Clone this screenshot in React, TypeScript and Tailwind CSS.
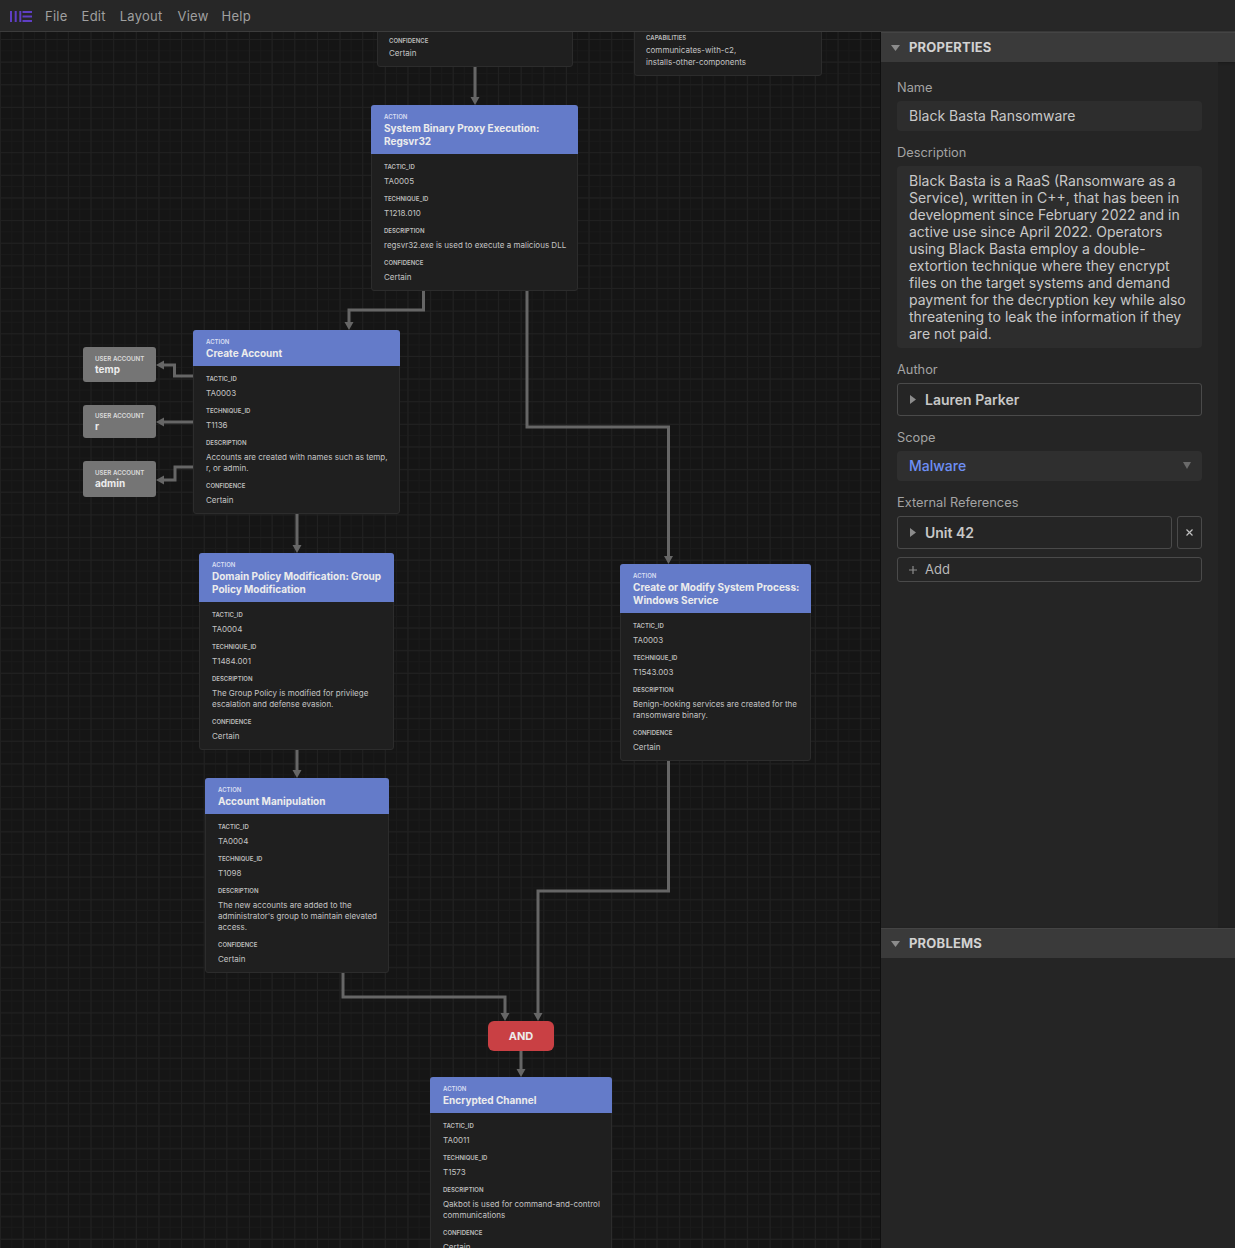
import React from 'react';

type Field = { label: string; value: string };

const action = (tactic: string, technique: string, description: string): Field[] => [
  { label: 'TACTIC_ID', value: tactic },
  { label: 'TECHNIQUE_ID', value: technique },
  { label: 'DESCRIPTION', value: description },
  { label: 'CONFIDENCE', value: 'Certain' },
];

const Rows = ({ fields }: { fields: Field[] }) => (
  <div className="pt-[9px] pr-[9px] pl-3">
    {fields.map((f) => (
      <div key={f.label} className="pb-[8px] last:pb-[7px]">
        <div className="text-[6px] leading-[8px] font-semibold text-[#bdbdbd]">{f.label}</div>
        <div className="mt-[5px] text-[8px] leading-[11px] text-[#c4c4c4]">{f.value}</div>
      </div>
    ))}
  </div>
);

const ActionNode = ({
  className,
  title,
  fields,
}: {
  className: string;
  title: string;
  fields: Field[];
}) => (
  <div className={`absolute rounded-[3px] border border-[#2c2c2c] bg-[#1f1f1f] ${className}`}>
    <div className="-mx-px -mt-px rounded-t-[3px] bg-[#647bc9] pt-[8px] pr-[10px] pb-[5.5px] pl-[13px]">
      <div className="text-[6px] leading-[8px] font-semibold text-[#d9dff2]">ACTION</div>
      <div className="mt-[1px] text-[10px] leading-[13px] font-bold text-[#ececec]">{title}</div>
    </div>
    <Rows fields={fields} />
  </div>
);

const AccountNode = ({ className, name }: { className: string; name: string }) => (
  <div className={`absolute w-[73px] rounded-[3px] bg-[#757575] pl-3 ${className}`}>
    <div className="text-[6.2px] leading-[8px] font-semibold whitespace-nowrap text-[#dcdcdc]">USER ACCOUNT</div>
    <div className="text-[10px] leading-[12px] font-bold text-[#ececec]">{name}</div>
  </div>
);

// edge routes in page coordinates, last segment carries the arrow head
const edges = [
  'M475 67V98',
  'M423.5 290V310H349V323',
  'M527 290V427H668.5V557',
  'M193 376H174.5V365H163',
  'M193 422H163',
  'M193 467H175V480H163',
  'M297 513V546',
  'M297 750V771',
  'M343 973V997H505V1014',
  'M668.5 761V891H538V1014',
  'M521 1051V1070',
];

const arrows = [
  '470.5 97 479.5 97 475 105',
  '344.5 322 353.5 322 349 330',
  '664 556 673 556 668.5 564',
  '164 360.5 164 369.5 156 365',
  '164 417.5 164 426.5 156 422',
  '164 475.5 164 484.5 156 480',
  '292.5 545 301.5 545 297 553',
  '292.5 770 301.5 770 297 778',
  '500.5 1013 509.5 1013 505 1021',
  '533.5 1013 542.5 1013 538 1021',
  '516.5 1069 525.5 1069 521 1077',
];

const Edges = () => (
  <svg className="absolute inset-0 h-[1216px] w-[881px]" viewBox="0 32 881 1216" fill="none">
    {edges.map((d) => (
      <path key={d} d={d} stroke="#666666" strokeWidth="3" />
    ))}
    {arrows.map((p) => (
      <polygon key={p} points={p} fill="#666666" />
    ))}
  </svg>
);

const Caret = ({ open }: { open?: boolean }) =>
  open ? (
    <svg width="9" height="6" viewBox="0 0 9 6">
      <path d="M0 0H9L4.5 6Z" fill="#8c8c8c" />
    </svg>
  ) : (
    <svg width="6" height="9" viewBox="0 0 6 9">
      <path d="M0 0V9L6 4.5Z" fill="#8c8c8c" />
    </svg>
  );

const PanelHeader = ({ title }: { title: string }) => (
  <div className="flex h-[30px] shrink-0 items-center gap-[9px] border-t border-[#444444] bg-[#3a3a3a] pl-[10px] shadow-[0_1px_2px_#1a1a1a]">
    <Caret open />
    <span className="text-[13px] font-bold tracking-[0.2px] text-[#d2d2d2]">{title}</span>
  </div>
);

const Label = ({ children }: { children: React.ReactNode }) => (
  <div className="mb-[5px] h-[17px] pt-[1px] text-[12.8px] leading-[16px] text-[#a3a3a3]">{children}</div>
);

const Expander = ({ title, className }: { title: string; className: string }) => (
  <div className={`flex h-[33px] items-center gap-[9px] rounded-[3px] border border-[#4a4a4a] pl-[12px] ${className}`}>
    <Caret />
    <span className="text-[14px] font-semibold text-[#c8c8c8]">{title}</span>
  </div>
);

export default function App() {
  return (
    <div className="flex h-screen w-full flex-col overflow-hidden bg-[#252525] font-['Inter',sans-serif]">
      {/* Menu bar */}
      <header className="flex h-[32px] shrink-0 items-center border-b border-[#3c3c3c] bg-[#272727] pt-[2px] pl-[10px] text-[13px] tracking-[0.25px] text-[#a0a0a0]">
        <svg width="22" height="11" viewBox="0 0 22 11" fill="#5f3fc4">
          <rect x="0" y="0" width="2" height="11" />
          <rect x="4.7" y="0" width="2" height="11" />
          <rect x="9.3" y="0" width="2" height="11" />
          <rect x="12.5" y="0" width="9.5" height="2" />
          <rect x="12.5" y="4.5" width="9.5" height="2" />
          <rect x="12.5" y="9" width="9.5" height="2" />
        </svg>
        <span className="ml-[13px]">File</span>
        <span className="ml-[14px]">Edit</span>
        <span className="ml-[14px]">Layout</span>
        <span className="ml-[15px]">View</span>
        <span className="ml-[13px]">Help</span>
      </header>

      <div className="flex min-h-0 flex-1">
        {/* Flow canvas */}
        <main className="relative w-[881px] shrink-0 overflow-hidden border-r border-[#0f0f0f] bg-[#151515] bg-[linear-gradient(#212121_1px,transparent_1px),linear-gradient(90deg,#212121_1px,transparent_1px),linear-gradient(#1a1a1a_1px,transparent_1px),linear-gradient(90deg,#1a1a1a_1px,transparent_1px)] bg-[size:22.65px_22.65px,22.65px_22.65px,11.325px_11.325px,11.325px_11.325px] bg-[position:0px_7px,0px_7px,0px_7px,0px_7px]">
          <Edges />

          <div className="absolute top-[-1px] left-[377px] w-[196px] rounded-b-[3px] border border-[#2c2c2c] bg-[#1f1f1f] px-[11px] pt-[5px] pb-[7px]">
            <div className="text-[6px] leading-[8px] font-semibold text-[#bdbdbd]">CONFIDENCE</div>
            <div className="mt-[3px] text-[8px] leading-[11px] text-[#c4c4c4]">Certain</div>
          </div>
          <div className="absolute top-[-1px] left-[634px] w-[188px] rounded-b-[3px] border border-[#2c2c2c] bg-[#1f1f1f] px-[11px] pt-[2px] pb-[7px]">
            <div className="text-[6px] leading-[8px] font-semibold text-[#bdbdbd]">CAPABILITIES</div>
            <div className="mt-[2px] text-[8px] leading-[12px] text-[#c4c4c4]">
              communicates-with-c2,
              <br />
              installs-other-components
            </div>
          </div>

          <ActionNode
            className="top-[73px] left-[371px] w-[207px]"
            title="System Binary Proxy Execution: Regsvr32"
            fields={action('TA0005', 'T1218.010', 'regsvr32.exe is used to execute a malicious DLL')}
          />
          <ActionNode
            className="top-[298px] left-[193px] w-[207px]"
            title="Create Account"
            fields={action('TA0003', 'T1136', 'Accounts are created with names such as temp, r, or admin.')}
          />
          <ActionNode
            className="top-[521px] left-[199px] w-[195px]"
            title="Domain Policy Modification: Group Policy Modification"
            fields={action('TA0004', 'T1484.001', 'The Group Policy is modified for privilege escalation and defense evasion.')}
          />
          <ActionNode
            className="top-[746px] left-[205px] w-[184px]"
            title="Account Manipulation"
            fields={action('TA0004', 'T1098', "The new accounts are added to the administrator's group to maintain elevated access.")}
          />
          <ActionNode
            className="top-[532px] left-[620px] w-[191px]"
            title="Create or Modify System Process: Windows Service"
            fields={action('TA0003', 'T1543.003', 'Benign-looking services are created for the ransomware binary.')}
          />
          <ActionNode
            className="top-[1045px] left-[430px] w-[182px]"
            title="Encrypted Channel"
            fields={action('TA0011', 'T1573', 'Qakbot is used for command-and-control communications')}
          />

          <AccountNode className="top-[315px] left-[83px] h-[35px] pt-[8px]" name="temp" />
          <AccountNode className="top-[373px] left-[83px] h-[33px] pt-[7px]" name="r" />
          <AccountNode className="top-[429px] left-[83px] h-[36px] pt-[8px]" name="admin" />

          <div className="absolute top-[989px] left-[488px] flex h-[30px] w-[66px] items-center justify-center rounded-[6px] bg-[#c94044] text-[11px] font-bold text-[#ececec]">
            AND
          </div>
        </main>

        {/* Side panels */}
        <aside className="flex min-w-0 flex-1 flex-col bg-[#212121]">
          <PanelHeader title="PROPERTIES" />
          <div className="h-[866px] w-[337px] shrink-0 bg-[#252525] pt-[17px] pr-[16px] pl-[16px]">
            <Label>Name</Label>
            <div className="flex h-[30px] items-center rounded-[4px] bg-[#2d2d2d] px-3 pb-[1px] text-[14px] text-[#c8c8c8]">
              Black Basta Ransomware
            </div>

            <div className="mt-[13px]">
              <Label>Description</Label>
              <div className="rounded-[4px] bg-[#2d2d2d] px-3 py-[6px] text-[14px] leading-[17px] text-[#c8c8c8]">
                Black Basta is a RaaS (Ransomware as a Service), written in C++, that has been in development since February 2022 and in active use since April 2022. Operators using Black Basta employ a double-extortion technique where they encrypt files on the target systems and demand payment for the decryption key while also threatening to leak the information if they are not paid.
              </div>
            </div>

            <div className="mt-[13px]">
              <Label>Author</Label>
              <Expander title="Lauren Parker" className="w-full" />
            </div>

            <div className="mt-[13px]">
              <Label>Scope</Label>
              <div className="flex h-[30px] items-center justify-between rounded-[4px] bg-[#2f2f2f] pr-[11px] pb-[1px] pl-3 text-[14px] font-medium text-[#6e8ff5]">
                Malware
                <svg width="8" height="7" viewBox="0 0 8 7">
                  <path d="M0 0H8L4 7Z" fill="#6a6a6a" />
                </svg>
              </div>
            </div>

            <div className="mt-[13px]">
              <Label>External References</Label>
              <div className="flex gap-[5px]">
                <Expander title="Unit 42" className="flex-1" />
                <div className="flex h-[33px] w-[25px] items-center justify-center rounded-[3px] border border-[#4a4a4a]">
                  <svg width="7" height="7" viewBox="0 0 7 7" stroke="#c0c0c0" strokeWidth="1.2">
                    <path d="M0.5 0.5L6.5 6.5M6.5 0.5L0.5 6.5" />
                  </svg>
                </div>
              </div>
              <div className="mt-[8px] flex h-[25px] items-center gap-[8px] rounded-[3px] border border-[#4a4a4a] pl-[11px] text-[13px] text-[#b8b8b8]">
                <svg width="8" height="8" viewBox="0 0 8 8" stroke="#8c8c8c" strokeWidth="1.2">
                  <path d="M4 0V8M0 4H8" />
                </svg>
                Add
              </div>
            </div>
          </div>
          <PanelHeader title="PROBLEMS" />
          <div className="flex-1 bg-[#252525]" />
        </aside>
      </div>
    </div>
  );
}
